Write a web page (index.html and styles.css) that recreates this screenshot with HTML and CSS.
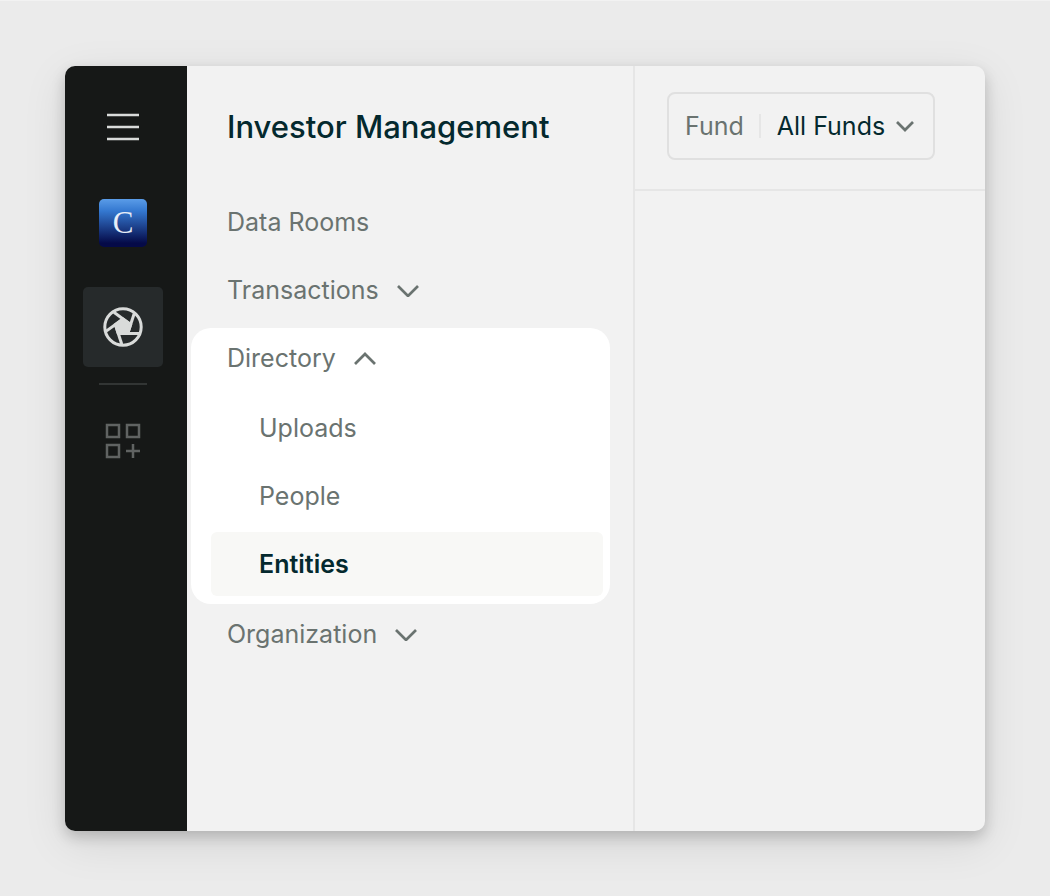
FILE: index.html
```
<!DOCTYPE html>
<html lang="en">
<head>
	<meta charset="UTF-8">
	<meta name="viewport" content="width=device-width, initial-scale=1">
	<title>Investor Management</title>
	<link rel="stylesheet" href="styles.css">
</head>
<body>
	<div class="app">
		<div class="rail">
			<button class="rail-btn menu" type="button" aria-label="Menu">
				<svg width="32" height="28" viewBox="0 0 32 28"><path d="M0 2h32M0 14h32M0 26h32"/></svg>
			</button>
			<a class="logo" href="#">C</a>
			<a class="rail-btn tile" href="#" aria-label="Investor Management">
				<svg width="40" height="40" viewBox="0 0 40 40">
					<circle cx="20" cy="20" r="18.2"/>
					<path class="fill" d="M15.3 26.5h9.4l2.9-9L20 12l-7.6 5.5z"/>
					<path d="M15.3 26.5H36"/>
					<path d="M15.3 26.5H36" transform="rotate(72 20 20)"/>
					<path d="M15.3 26.5H36" transform="rotate(144 20 20)"/>
					<path d="M15.3 26.5H36" transform="rotate(216 20 20)"/>
					<path d="M15.3 26.5H36" transform="rotate(288 20 20)"/>
				</svg>
			</a>
			<hr class="rail-line">
			<button class="rail-btn apps" type="button" aria-label="Add app">
				<svg width="36" height="36" viewBox="0 0 36 36">
					<path d="M2 2h12v12H2zM22 2h12v12H22zM2 22h12v12H2zM28 21v14M21 28h14"/>
				</svg>
			</button>
		</div>
		<nav class="side">
			<h1>Investor Management</h1>
			<a class="item" href="#">Data Rooms</a>
			<button class="item" type="button" aria-expanded="false">Transactions
				<svg class="arrow" width="22" height="14" viewBox="0 0 22 14"><path d="M1 3l10 10L21 3"/></svg>
			</button>
			<div class="group">
				<button class="item" type="button" aria-expanded="true">Directory
					<svg class="arrow" width="22" height="14" viewBox="0 0 22 14"><path d="M1 13L11 3l10 10"/></svg>
				</button>
				<ul class="sub">
					<li><a href="#">Uploads</a></li>
					<li><a href="#">People</a></li>
					<li><a class="on" href="#">Entities</a></li>
				</ul>
			</div>
			<button class="item" type="button" aria-expanded="false">Organization
				<svg class="arrow" width="22" height="14" viewBox="0 0 22 14"><path d="M1 3l10 10L21 3"/></svg>
			</button>
		</nav>
		<main class="main">
			<header class="bar">
				<div class="picker">
					<label for="fund">Fund</label>
					<select id="fund">
						<option>All Funds</option>
					</select>
					<svg class="arrow" width="18" height="12" viewBox="0 0 18 12"><path d="M1 2l8 8 8-8"/></svg>
				</div>
			</header>
		</main>
	</div>
</body>
</html>
```
FILE: styles.css
```
* {
	box-sizing: border-box;
	margin: 0;
	padding: 0;
}
body {
	min-height: 100vh;
	padding: 65px;
	border-top: 1px solid #f2f2f2;
	background: #ebebeb;
	font-family: Inter, "Liberation Sans", sans-serif;
	font-size: 25px;
	line-height: 32px;
	color: #6a7370;
	display: flex;
}
button, select {
	border: 0;
	background: none;
	font: inherit;
	color: inherit;
	cursor: pointer;
}
a {
	color: inherit;
	text-decoration: none;
}
ul {
	list-style: none;
}
svg {
	display: block;
	fill: none;
	stroke: currentColor;
}
.app {
	flex: 1;
	display: grid;
	grid-template-columns: 122px 448px 1fr;
	border-radius: 10px;
	overflow: hidden;
	background: #f2f2f2;
	box-shadow: 0 6px 14px rgba(0, 0, 0, 0.18), 0 12px 44px rgba(0, 0, 0, 0.1);
}

/* icon rail */
.rail {
	padding: 37px 24px 0 18px;
	background: #161817;
	display: flex;
	flex-direction: column;
	align-items: center;
}
.rail-btn {
	display: flex;
	align-items: center;
	justify-content: center;
}
.menu {
	width: 48px;
	height: 48px;
	color: #d9dbda;
	stroke-width: 2.6;
}
.logo {
	width: 48px;
	height: 48px;
	margin: 48px 0 40px;
	border-radius: 5px;
	background: linear-gradient(#5a9ce8, #3478d0 25%, #050a48 92%);
	font-family: "Liberation Serif", serif;
	font-size: 31px;
	line-height: 48px;
	text-align: center;
	color: #e8eef8;
}
.tile {
	width: 80px;
	height: 80px;
	border-radius: 5px;
	background: #262a2b;
	color: #d9dbda;
	stroke-width: 3;
}
.tile .fill {
	fill: currentColor;
}
.rail-line {
	width: 48px;
	margin: 16px 0 28px;
	border: 0;
	border-top: 2px solid #323534;
}
.apps {
	width: 48px;
	height: 56px;
	color: #606362;
	stroke-width: 2.5;
}

/* navigation */
.side {
	padding: 0 23px 0 4px;
	border-right: 2px solid #e6e6e6;
}
h1 {
	padding: 41px 0 45px 36px;
	font-size: 31px;
	line-height: 40px;
	font-weight: 500;
	color: #04292e;
}
.item {
	width: 100%;
	height: 60px;
	margin-bottom: 8px;
	padding-left: 36px;
	display: flex;
	align-items: center;
	gap: 18px;
}
.arrow {
	stroke-width: 2.7;
}
.group {
	padding-bottom: 8px;
	border-radius: 20px;
	background: #fff;
}
.sub {
	padding: 0 7px 0 20px;
	display: grid;
	gap: 4px;
}
.sub a {
	display: block;
	padding: 16px 0 16px 48px;
	border-radius: 6px;
}
.sub .on {
	background: #f8f8f6;
	font-weight: 600;
	color: #04292e;
}

/* content */
.bar {
	padding: 26px 32px 29px;
	border-bottom: 2px solid #e6e6e6;
	display: flex;
}
.picker {
	height: 68px;
	padding: 0 19px 0 16px;
	border: 2px solid #e0e0e0;
	border-radius: 8px;
	display: flex;
	align-items: center;
}
.picker label {
	margin-right: 15px;
}
.picker select {
	height: 24px;
	padding: 0 10px 0 16px;
	border-left: 2px solid #e6e6e6;
	line-height: 24px;
	appearance: none;
	color: #04292e;
}
```
